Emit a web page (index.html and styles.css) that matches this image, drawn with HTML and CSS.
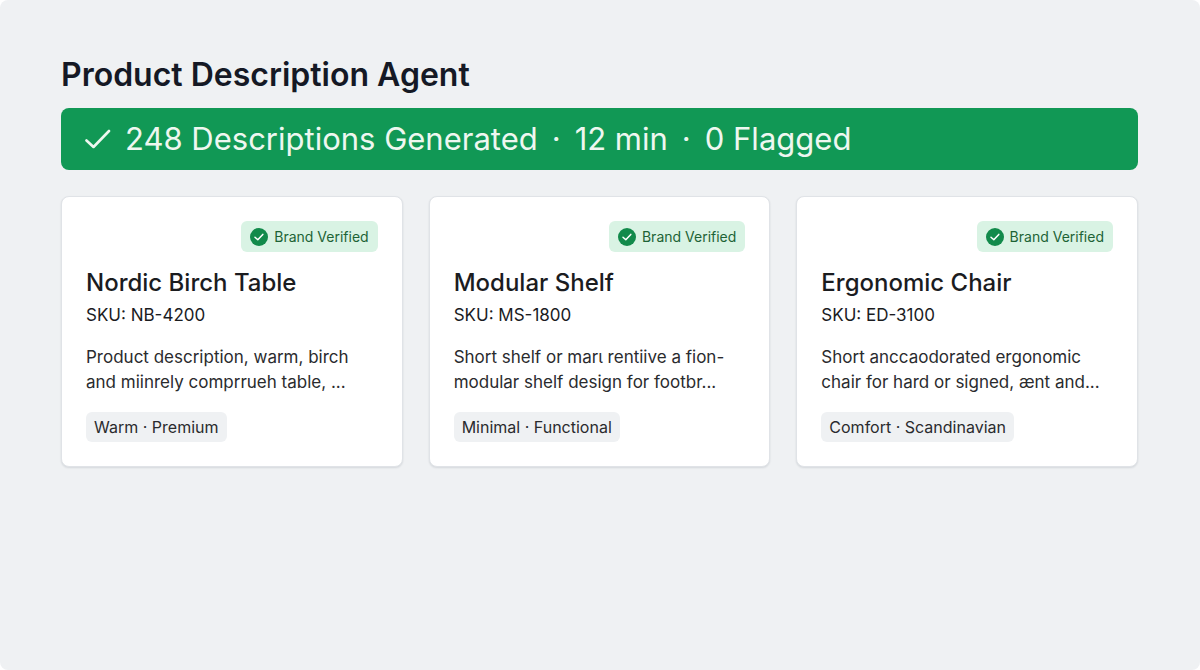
FILE: index.html
```html
<!DOCTYPE html>
<html lang="en">

<head>
    <meta charset="UTF-8">
    <meta name="viewport" content="width=device-width, initial-scale=1.0">
    <title>Product Description Agent</title>
    <link rel="stylesheet" href="styles.css">
</head>

<body>

    <main class="page">
        <h1>Product Description Agent</h1>

        <div class="banner">
            <svg class="banner-check" viewBox="0 0 26 20" aria-hidden="true">
                <path d="M1.5 11.5 L8.5 18 L24 2" />
            </svg>
            <span>248 Descriptions Generated</span>
            <span>·</span>
            <span>12 min</span>
            <span>·</span>
            <span>0 Flagged</span>
        </div>

        <div class="cards">
            <article class="card">
                <span class="badge">
                    <svg class="badge-icon" viewBox="0 0 18 18" aria-hidden="true">
                        <circle cx="9" cy="9" r="9" />
                        <path d="M5 9.3 L7.8 11.8 L12.8 6.4" />
                    </svg>
                    Brand Verified
                </span>
                <h2>Nordic Birch Table</h2>
                <p class="sku">SKU: NB-4200</p>
                <p class="description">Product description, warm, birch<br>and miinrely comprrueh table, ...</p>
                <span class="tag">Warm · Premium</span>
            </article>

            <article class="card">
                <span class="badge">
                    <svg class="badge-icon" viewBox="0 0 18 18" aria-hidden="true">
                        <circle cx="9" cy="9" r="9" />
                        <path d="M5 9.3 L7.8 11.8 L12.8 6.4" />
                    </svg>
                    Brand Verified
                </span>
                <h2>Modular Shelf</h2>
                <p class="sku">SKU: MS-1800</p>
                <p class="description">Short shelf or marι rentiive a fion-<br>modular shelf design for footbr...</p>
                <span class="tag">Minimal · Functional</span>
            </article>

            <article class="card">
                <span class="badge">
                    <svg class="badge-icon" viewBox="0 0 18 18" aria-hidden="true">
                        <circle cx="9" cy="9" r="9" />
                        <path d="M5 9.3 L7.8 11.8 L12.8 6.4" />
                    </svg>
                    Brand Verified
                </span>
                <h2>Ergonomic Chair</h2>
                <p class="sku">SKU: ED-3100</p>
                <p class="description">Short anccaodorated ergonomic<br>chair for hard or signed, ænt and...</p>
                <span class="tag">Comfort · Scandinavian</span>
            </article>
        </div>
    </main>

</body>

</html>
```
FILE: styles.css
```css
body {
    margin: 0;
    background-color: #ffffff;
    color: #1b1c1f;
    font-family: Inter, "Liberation Sans", sans-serif;
}

h1,
h2,
p {
    margin: 0;
}

.page {
    min-height: 100vh;
    padding: 55px 62px 40px 61px;
    border-radius: 8px;
    background-color: #eff1f3;
    box-sizing: border-box;
}

h1 {
    margin-bottom: 13px;
    color: #151925;
    font-size: 32px;
    font-weight: 600;
    line-height: 40px;
}

.banner {
    display: flex;
    align-items: center;
    gap: 14px;
    padding: 11px 24px;
    border-radius: 8px;
    background-color: #119855;
    color: #eef7f0;
    font-size: 31px;
    line-height: 40px;
}

.banner-check {
    width: 26px;
    height: 20px;
    fill: none;
    stroke: #eef7f0;
    stroke-width: 2.6;
    stroke-linecap: round;
    stroke-linejoin: round;
}

.cards {
    display: grid;
    grid-template-columns: repeat(3, 1fr);
    gap: 26px;
    margin-top: 26px;
}

.card {
    display: flex;
    flex-direction: column;
    align-items: flex-start;
    padding: 24px;
    border: 1px solid #e0e3e7;
    border-radius: 8px;
    background-color: #ffffff;
    box-shadow: 0 1px 2px rgba(20, 30, 50, 0.12);
}

.badge {
    display: flex;
    align-items: center;
    align-self: flex-end;
    gap: 6px;
    padding: 0 9px;
    border-radius: 6px;
    background-color: #d9f3e4;
    color: #1d6336;
    font-size: 14px;
    line-height: 31px;
}

.badge-icon {
    width: 18px;
    height: 18px;
}

.badge-icon circle {
    fill: #128a4b;
}

.badge-icon path {
    fill: none;
    stroke: #ffffff;
    stroke-width: 1.5;
    stroke-linecap: round;
    stroke-linejoin: round;
}

h2 {
    margin-top: 15px;
    font-size: 24px;
    font-weight: 500;
    line-height: 32px;
}

.sku {
    margin-top: 4px;
    font-size: 17px;
    line-height: 25px;
}

.description {
    margin-top: 17px;
    color: #2a2b2e;
    font-size: 17px;
    line-height: 25px;
    white-space: nowrap;
}

.tag {
    margin-top: 17px;
    padding: 0 8px;
    border-radius: 6px;
    background-color: #eff1f3;
    color: #2a2b2e;
    font-size: 16px;
    line-height: 30px;
}

@media (max-width: 1080px) {
    .cards {
        grid-template-columns: 1fr;
    }

    .banner {
        flex-wrap: wrap;
    }
}
```
